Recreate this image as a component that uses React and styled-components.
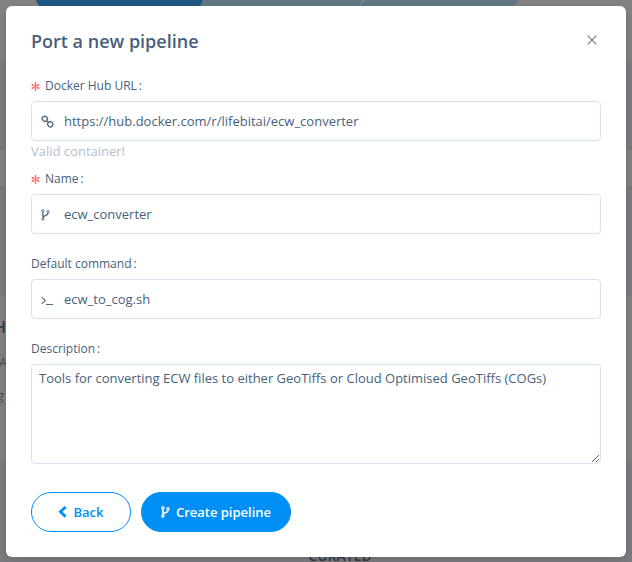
import React from "react";
import styled, { createGlobalStyle, css } from "styled-components";

const GlobalStyle = createGlobalStyle`
  * { box-sizing: border-box; }
  body { margin: 0; overflow: hidden; font-family: "Open Sans", "Noto Sans", sans-serif; color: #475f7b; }
`;

const Screen = styled.div`
  position: relative;
  width: 632px;
  height: 562px;
  overflow: hidden;
  background: #848484;
`;

const Page = styled.div`
  display: flex;
  flex-direction: column;
  height: 100%;
`;

const Band = styled.div`
  flex: none;
  height: ${(p) => p.$height}px;
  background: ${(p) => (p.$tinted ? "#7c7d81" : "#838383")};
  ${(p) => p.$ruled && css`
    border-top: 1px solid #73757e;
    border-bottom: 1px solid #73757e;
  `}
`;

const Steps = styled.svg`
  display: block;
`;

const Peek = styled.div`
  font-size: ${(p) => p.$size}px;
  font-weight: ${(p) => p.$weight || 400};
  font-style: ${(p) => (p.$italic ? "italic" : "normal")};
  line-height: ${(p) => p.$line}px;
  margin-left: ${(p) => p.$shift}px;
  color: ${(p) => (p.$weight ? "#2f3b4a" : "#424c58")};
`;

const Curated = styled.div`
  padding-top: 85px;
  text-align: center;
  padding-left: 48px;
  font-size: 14px;
  font-weight: 600;
  line-height: 20px;
  color: #303a46;
`;

const Dialog = styled.section`
  position: absolute;
  inset: 6px 6px 5px;
  padding: 0 25px;
  display: flex;
  flex-direction: column;
  background: #fff;
  border-radius: 6px;
  box-shadow: 0 4px 12px rgba(0, 0, 0, 0.15);
`;

const Header = styled.header`
  display: flex;
  justify-content: space-between;
  align-items: center;
  height: 70px;
  flex: none;
`;

const Title = styled.h1`
  margin: 0;
  font-size: 18px;
  font-weight: 600;
  line-height: 24px;
`;

const Close = styled.button`
  display: flex;
  padding: 0;
  margin: 0 4px 3px 0;
  border: 0;
  background: none;
  color: #757575;
`;

const Field = styled.div`
  display: flex;
  flex-direction: column;
  flex: none;
  height: ${(p) => p.$height}px;
`;

const Label = styled.label`
  display: flex;
  align-items: center;
  height: 19px;
  margin-bottom: 6px;
  font-size: 12px;
  white-space: pre;
`;

const Colon = styled.span`
  margin-left: 2px;
`;

const Star = styled.svg`
  margin: 2px 5px 0 0;
`;

const InputBox = styled.div`
  display: flex;
  align-items: center;
  flex: none;
  height: 40px;
  padding-left: 9px;
  border: 1px solid #dae1f2;
  border-radius: 4px;
`;

const IconSlot = styled.span`
  display: flex;
  width: 23px;
  flex: none;
  padding-top: 1px;
  color: #536a84;
`;

const Input = styled.input`
  flex: 1;
  min-width: 0;
  padding: 0;
  border: 0;
  outline: 0;
  background: none;
  font: 13px/20px "Open Sans", sans-serif;
  color: #475f7b;
`;

const Help = styled.div`
  font-size: 13px;
  line-height: 21px;
  color: #b4c0d1;
`;

const TextArea = styled.textarea`
  display: block;
  width: 570px;
  height: 100px;
  flex: none;
  margin: 0;
  padding: 3px 7px;
  border: 1px solid #dae1f2;
  border-radius: 4px;
  outline: 0;
  resize: vertical;
  font: 13px/20px "Open Sans", sans-serif;
  color: #475f7b;
`;

const Actions = styled.footer`
  display: flex;
  gap: 10px;
`;

const Button = styled.button`
  display: flex;
  align-items: center;
  justify-content: center;
  gap: 6px;
  width: ${(p) => p.$width}px;
  height: 40px;
  padding: 0;
  border: 1px solid #008ff5;
  border-radius: 20px;
  background: ${(p) => (p.$primary ? "#008ff5" : "#fff")};
  color: ${(p) => (p.$primary ? "#fff" : "#008ff5")};
  font: 600 13px/20px "Open Sans", sans-serif;

  svg { margin-bottom: 1px; }
`;

const LinkIcon = () => (
  <svg width="13" height="13" viewBox="0 0 13 13" fill="none" stroke="currentColor" strokeWidth="1.4">
    <rect x="1.2" y="1.3" width="5.2" height="4.8" rx="2.2" transform="rotate(45 3.8 3.7)" />
    <rect x="6.6" y="6.8" width="5.2" height="4.8" rx="2.2" transform="rotate(45 9.2 9.2)" />
    <path d="M4.8 5 8.2 8.2" strokeWidth="1.1" />
  </svg>
);

const BranchIcon = ({ weight = 0.9 }) => (
  <svg width="9" height="12" viewBox="0 0 9 12" fill="none" stroke="currentColor" strokeWidth={weight}>
    <circle cx="1.9" cy="1.8" r="1.2" />
    <circle cx="7" cy="2.7" r="1.2" />
    <circle cx="1.9" cy="10.1" r="1.2" />
    <path d="M1.9 3v6M7 3.9c0 3.6-4.8 2-4.9 4.8" strokeWidth={weight + 0.4} />
  </svg>
);

const TerminalIcon = () => (
  <svg width="13" height="12" viewBox="0 0 13 12" fill="none" stroke="currentColor">
    <path d="m.7 3.2 3.6 3.3L.7 9.8" strokeWidth="1.1" />
    <path d="M5 10.5h7" />
  </svg>
);

const RequiredMark = () => (
  <Star width="9" height="9" viewBox="0 0 9 9" fill="none" stroke="#ff6b60">
    <path d="M4.5 .3v8.4M.7 2.4l7.6 4.2M8.3 2.4.7 6.6" strokeWidth="1" />
    <path d="M4.5 .4v2.3M4.5 6.3v2.3M.8 2.5l2 1.1M6.2 5.4l2 1.1M8.2 2.5l-2 1.1M2.8 5.4l-2 1.1" strokeWidth="1.6" />
  </Star>
);

function Caption({ required, children }) {
  return (
    <Label>
      {required && <RequiredMark />}
      {children}
      <Colon>:</Colon>
    </Label>
  );
}

function TextField({ label, required, icon, value, help, height }) {
  return (
    <Field $height={height}>
      <Caption required={required}>{label}</Caption>
      <InputBox>
        <IconSlot>{icon}</IconSlot>
        <Input defaultValue={value} aria-label={label} />
      </InputBox>
      {help && <Help>{help}</Help>}
    </Field>
  );
}

export default function App() {
  return (
    <Screen>
      <GlobalStyle />
      <Page>
        <Band $height={60}>
          <Steps width="632" height="12" viewBox="0 0 632 12">
            <path d="M36 0q2 6 8 12H198l5-12Z" fill="#1f5985" />
            <path d="M203 0l-5 12H354l10-12Z" fill="#627884" />
            <path d="M364 0l-10 12H508q8-6 10-12Z" fill="#627884" />
            <path d="M364 0l-5 6" stroke="#8b9192" />
          </Steps>
        </Band>
        <Band $height={88} $tinted />
        <Band $height={40} $ruled />
        <Band $height={109} $tinted />
        <Band $height={164}>
          <Peek $size={16} $weight={600} $line={60} $shift={-6}>H</Peek>
          <Peek $size={13} $line={10} $shift={-1}>A</Peek>
          <Peek $size={13} $line={56} $shift={-3} $italic>g</Peek>
        </Band>
        <Band $height={101} $tinted>
          <Curated>CURATED</Curated>
        </Band>
      </Page>
      <Dialog role="dialog" aria-label="Port a new pipeline">
        <Header>
          <Title>Port a new pipeline</Title>
          <Close aria-label="Close">
            <svg width="10" height="10" viewBox="0 0 10 10" fill="none" stroke="currentColor" strokeWidth="1.1">
              <path d="m.7 .7 8.6 8.6M9.3 .7.7 9.3" />
            </svg>
          </Close>
        </Header>
        <TextField label="Docker Hub URL" required icon={<LinkIcon />} value="https://hub.docker.com/r/lifebitai/ecw_converter" help="Valid container!" height={93} />
        <TextField label="Name" required icon={<BranchIcon />} value="ecw_converter" height={85} />
        <TextField label="Default command" icon={<TerminalIcon />} value="ecw_to_cog.sh" height={85} />
        <Field $height={153}>
          <Caption>Description</Caption>
          <TextArea aria-label="Description" defaultValue="Tools for converting ECW files to either GeoTiffs or Cloud Optimised GeoTiffs (COGs)" />
        </Field>
        <Actions>
          <Button $width={100}>
            <svg width="9" height="12" viewBox="0 0 9 12" fill="none" stroke="currentColor" strokeWidth="2.8">
              <path d="M7.6 1 2.4 5.8l5.2 4.8" />
            </svg>
            Back
          </Button>
          <Button $width={150} $primary>
            <BranchIcon weight={1.2} />
            Create pipeline
          </Button>
        </Actions>
      </Dialog>
    </Screen>
  );
}
